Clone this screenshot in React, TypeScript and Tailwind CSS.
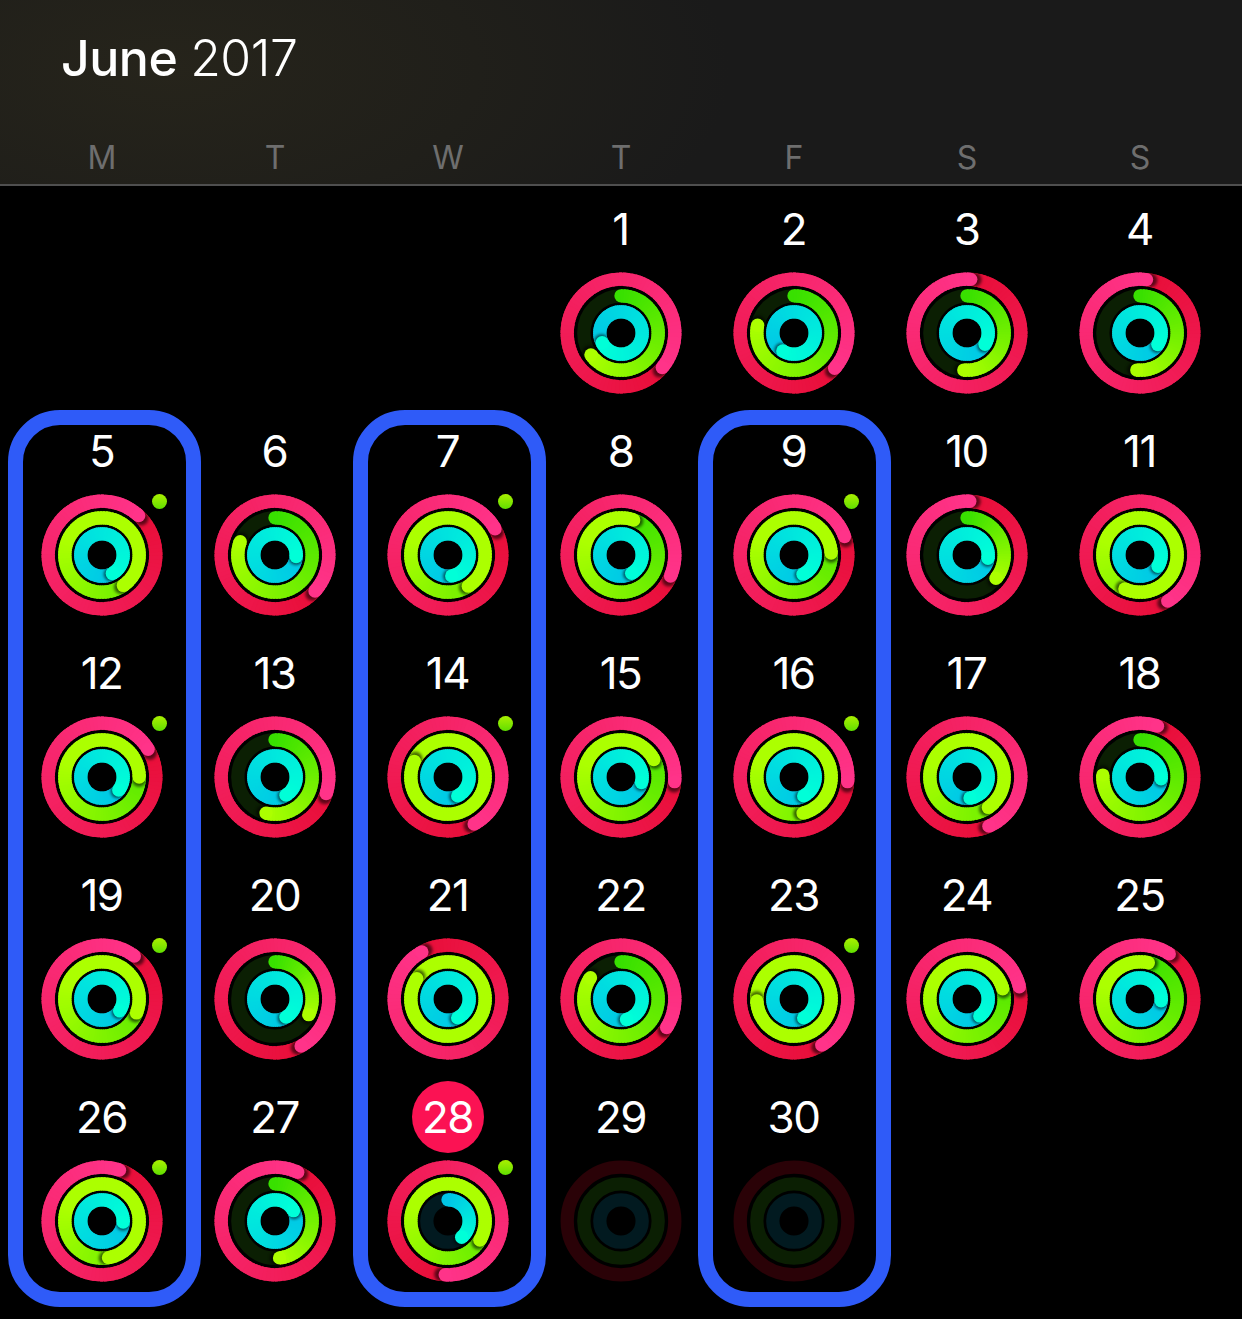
import React from 'react';

const weekdays = ['M', 'T', 'W', 'T', 'F', 'S', 'S'];

type RGB = [number, number, number];

// total sweep of each ring in degrees, over 360 means it lapped
const days: { day: number; rings?: [number, number, number]; dot?: boolean }[] = [
  { day: 1, rings: [490, 234, 603] },
  { day: 2, rings: [491, 282, 572] },
  { day: 3, rings: [364, 185, 482] },
  { day: 4, rings: [367, 185, 483] },
  { day: 5, rings: [403, 505, 511], dot: true },
  { day: 6, rings: [492, 291, 454] },
  { day: 7, rings: [421, 507, 530], dot: true },
  { day: 8, rings: [473, 380, 510] },
  { day: 9, rings: [430, 447, 515], dot: true },
  { day: 10, rings: [363, 129, 459] },
  { day: 11, rings: [509, 564, 482] },
  { day: 12, rings: [419, 450, 488], dot: true },
  { day: 13, rings: [468, 194, 509] },
  { day: 14, rings: [511, 655, 513], dot: true },
  { day: 15, rings: [455, 422, 465] },
  { day: 16, rings: [455, 526, 513], dot: true },
  { day: 17, rings: [516, 505, 532] },
  { day: 18, rings: [379, 273, 455] },
  { day: 19, rings: [397, 472, 484], dot: true },
  { day: 20, rings: [511, 115, 509] },
  { day: 21, rings: [691, 663, 513] },
  { day: 22, rings: [482, 305, 525] },
  { day: 23, rings: [509, 627, 513], dot: true },
  { day: 24, rings: [437, 434, 503] },
  { day: 25, rings: [393, 373, 455] },
  { day: 26, rings: [379, 530, 453], dot: true },
  { day: 27, rings: [385, 173, 421] },
  { day: 28, rings: [543, 481, 140], dot: true },
  { day: 29 },
  { day: 30 },
];

const ringStyles: { r: number; track: string; from: RGB; to: RGB }[] = [
  { r: 53.8, track: '#2a0207', from: [232, 14, 56], to: [255, 51, 137] },
  { r: 37.2, track: '#0b1f03', from: [56, 224, 0], to: [172, 255, 0] },
  { r: 21.2, track: '#021a20', from: [0, 198, 230], to: [0, 255, 216] },
];

const STROKE = 13.3;
const C = 61;

const point = (r: number, deg: number) => {
  const a = (deg * Math.PI) / 180;
  return { x: C + r * Math.sin(a), y: C - r * Math.cos(a) };
};

const mix = (a: RGB, b: RGB, t: number) =>
  `rgb(${a.map((v, i) => Math.round(v + (b[i] - v) * t)).join(',')})`;

const segment = (r: number, a: number, b: number) => {
  const p = point(r, a);
  const q = point(r, b);
  return `M${p.x.toFixed(2)} ${p.y.toFixed(2)}A${r} ${r} 0 0 1 ${q.x.toFixed(2)} ${q.y.toFixed(2)}`;
};

// how far along the colour ramp a given angle is
const rampAt = (a: number, sweep: number, ring: number) => {
  if (sweep <= 360) return a / sweep;
  // green brightens quicker once it has lapped
  if (ring === 1) return Math.min(a / 290, 1);
  return (a - (sweep - 360)) / 360;
};

const Arc: React.FC<{ id: string; ring: number; r: number; sweep: number; from: RGB; to: RGB }> = ({
  id,
  ring,
  r,
  sweep,
  from,
  to,
}) => {
  const step = 4;
  const first = Math.max(sweep - 360, 0);
  const segs: { a: number; b: number; color: string }[] = [];
  for (let a = first; a < sweep; a += step) {
    // each piece runs on under the next one so no seam shows
    const b = Math.min(a + step + 3, sweep);
    segs.push({ a, b, color: mix(from, to, rampAt(Math.min(a + step / 2, sweep), sweep, ring)) });
  }
  const cut = Math.max(segs.length - 6, 0);
  const start = point(r, 0);
  const tip = point(r, sweep);
  const shadow = point(r, sweep + 4);
  const draw = (s: { a: number; b: number; color: string }) => (
    <path key={s.a} d={segment(r, s.a, s.b)} fill="none" stroke={s.color} strokeWidth={STROKE} />
  );
  return (
    <g>
      {sweep <= 360 && <circle cx={start.x} cy={start.y} r={STROKE / 2} fill={mix(from, to, 0)} />}
      {segs.slice(0, cut).map(draw)}
      <g mask={`url(#${id}-mask)`}>
        <circle cx={shadow.x} cy={shadow.y} r={STROKE / 2 + 0.5} fill="#000" opacity={0.6} filter={`url(#${id}-blur)`} />
      </g>
      {segs.slice(cut).map(draw)}
      <circle cx={tip.x} cy={tip.y} r={STROKE / 2} fill={mix(from, to, 1)} />
    </g>
  );
};

const ActivityRings: React.FC<{ day: number; rings?: [number, number, number] }> = ({ day, rings }) => (
  <svg width="122" height="122" viewBox="0 0 122 122" className="block">
    {ringStyles.map((s, i) => (
      <g key={s.r}>
        <defs>
          <filter id={`d${day}r${i}-blur`} x="-60%" y="-60%" width="220%" height="220%">
            <feGaussianBlur stdDeviation="1.8" />
          </filter>
          <mask id={`d${day}r${i}-mask`} maskUnits="userSpaceOnUse" x="0" y="0" width="122" height="122">
            <circle cx={C} cy={C} r={s.r} fill="none" stroke="#fff" strokeWidth={STROKE} />
          </mask>
        </defs>
        <circle cx={C} cy={C} r={s.r} fill="none" stroke={s.track} strokeWidth={STROKE} />
        {rings && <Arc id={`d${day}r${i}`} ring={i} r={s.r} sweep={rings[i]} from={s.from} to={s.to} />}
      </g>
    ))}
  </svg>
);

export default function App() {
  return (
    <div className="h-[1319px] overflow-hidden bg-black text-white font-['Inter','Liberation_Sans',sans-serif]">
      <header className="h-[186px] border-b-2 border-[#4f4f4f] bg-[radial-gradient(ellipse_560px_260px_at_170px_70px,#26241b_0%,#201f1a_55%,#1a1a1a_100%)]">
        <h1 className="pl-[61px] pt-[27px] h-[138px] text-[50px] leading-[62px] font-medium tracking-[-0.5px]">
          June <span className="font-light">2017</span>
        </h1>
        <div className="grid grid-cols-7 px-[15.5px]">
          {weekdays.map((d, i) => (
            <div key={i} className="text-center text-[32px] leading-[40px] text-[#6e6e6e]">
              {d}
            </div>
          ))}
        </div>
      </header>

      <main className="relative">
        <div className="grid grid-cols-7 gap-y-[21px] px-[15.5px] pt-[7px]">
          <div className="col-span-3" />
          {days.map(({ day, rings, dot }) => (
            <div key={day} className="flex flex-col items-center gap-[7px]">
              <div
                className={`flex h-[72px] w-[72px] items-center justify-center rounded-full pr-[1px] text-[44px] tracking-[-1.5px] ${
                  day === 28 ? 'bg-[#fb1253]' : ''
                }`}
              >
                {day}
              </div>
              <div className="relative h-[122px] w-[122px]">
                <ActivityRings day={day} rings={rings} />
                {dot && (
                  <span className="absolute left-[111px] top-[-0.5px] h-[15px] w-[15px] rounded-full bg-gradient-to-b from-[#a8f000] to-[#5ede00]" />
                )}
              </div>
            </div>
          ))}
        </div>

        <div className="pointer-events-none absolute left-[7.5px] top-[224px] h-[897px] w-[193px] rounded-[52px] border-[15px] border-[#2f5bf8]" />
        <div className="pointer-events-none absolute left-[352.5px] top-[224px] h-[897px] w-[193px] rounded-[52px] border-[15px] border-[#2f5bf8]" />
        <div className="pointer-events-none absolute left-[697.5px] top-[224px] h-[897px] w-[193px] rounded-[52px] border-[15px] border-[#2f5bf8]" />
      </main>
    </div>
  );
}
